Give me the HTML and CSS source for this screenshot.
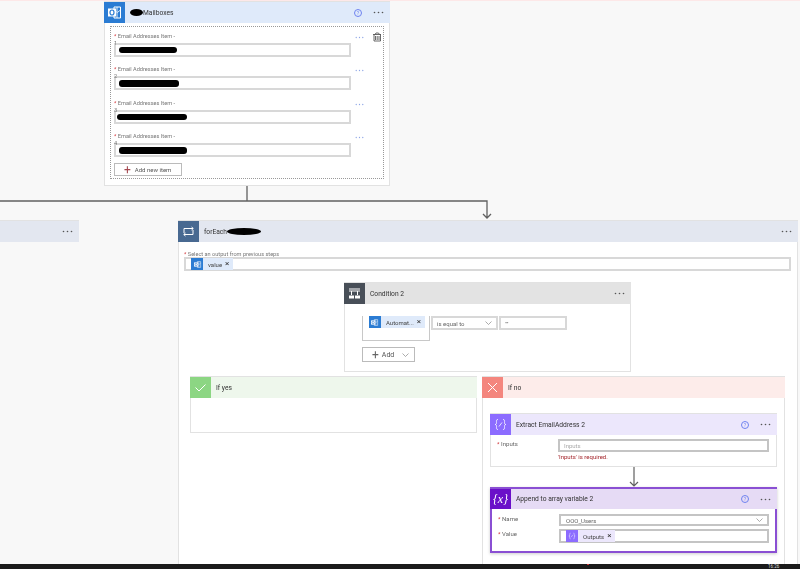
FILE: index.html
```html
<!DOCTYPE html>
<html>
    <head>
        <meta charset="utf-8">
        <title>Flow designer</title>
        <link rel="stylesheet" href="styles.css">
    </head>
    <body>
        <svg class="defs" width="0" height="0">
            <symbol id="outlook" viewBox="0 0 21 21">
                <path d="M10 5h6.500v11H10z" fill="none" stroke="#fff" stroke-width="1"/>
                <path d="M10 8l3.300 2.500L16.500 8M13 5v11" fill="none" stroke="#fff" stroke-width=".8"/>
                <rect x="4" y="6.500" width="8" height="8" fill="#fff"/>
                <ellipse cx="8" cy="10.500" rx="2" ry="2.500" fill="none" stroke="#2b7cd3" stroke-width="1.200"/>
            </symbol>
            <symbol id="dots" viewBox="0 0 11 3">
                <circle cx="1.500" cy="1.500" r=".8"/>
                <circle cx="5.500" cy="1.500" r=".8"/>
                <circle cx="9.500" cy="1.500" r=".8"/>
            </symbol>
            <symbol id="compose" viewBox="0 0 21 21">
                <path d="M8 5.500c-2 0-1.500 1.500-1.500 3 0 1.500-.5 2-1.500 2 1 0 1.500.5 1.500 2s-.5 3 1.500 3M13 5.500c2 0 1.500 1.500 1.500 3 0 1.500.5 2 1.500 2-1 0-1.500.5-1.500 2s.5 3-1.500 3M9 12.500l3-4" fill="none" stroke="#fff" stroke-width=".8"/>
            </symbol>
        </svg>

        <main class="canvas">
            <!-- connector lines between the steps -->
            <svg class="wires" width="800" height="230">
                <path d="M247 186V201M0 201H487V218M483 214l4 4 4-4" fill="none" stroke="#606060" stroke-width="1.300"/>
            </svg>

            <!-- Mailboxes step -->
            <section class="card mailboxes">
                <header class="head head-blue">
                    <span class="icon icon-outlook"><svg width="21" height="21"><use href="#outlook"/></svg></span>
                    <span class="blob blob-title"></span>
                    <span class="title title-tight">Mailboxes</span>
                    <span class="help">?</span>
                    <svg class="more" width="11" height="3"><use href="#dots"/></svg>
                </header>
                <div class="array">
                    <div class="row">
                        <div class="row-main">
                            <div class="item-label"><b>*</b> Email Addresses Item -<br>1</div>
                            <div class="field item-field"><span class="blob blob-1"></span></div>
                        </div>
                        <svg class="more more-blue" width="9" height="3"><use href="#dots"/></svg>
                        <svg class="bin" width="10" height="10" viewBox="0 0 10 10">
                            <path d="M1 2.500h8M2 2.500v6.500h6.500V2.500M3.500 4v4M5.200 4v4M7 4v4M3 2.500l1-1.500h2.500l1 1.500" fill="none" stroke="#444" stroke-width=".8"/>
                        </svg>
                    </div>
                    <div class="row">
                        <div class="row-main">
                            <div class="item-label"><b>*</b> Email Addresses Item -<br>2</div>
                            <div class="field item-field"><span class="blob blob-2"></span></div>
                        </div>
                        <svg class="more more-blue" width="9" height="3"><use href="#dots"/></svg>
                    </div>
                    <div class="row">
                        <div class="row-main">
                            <div class="item-label"><b>*</b> Email Addresses Item -<br>3</div>
                            <div class="field item-field"><span class="blob blob-3"></span></div>
                        </div>
                        <svg class="more more-blue" width="9" height="3"><use href="#dots"/></svg>
                    </div>
                    <div class="row">
                        <div class="row-main">
                            <div class="item-label"><b>*</b> Email Addresses Item -<br>4</div>
                            <div class="field item-field"><span class="blob blob-4"></span></div>
                        </div>
                        <svg class="more more-blue" width="9" height="3"><use href="#dots"/></svg>
                    </div>
                    <button type="button" class="btn add-item"><span class="plus plus-red">+</span> Add new item</button>
                </div>
            </section>

            <!-- collapsed step cut off by the left edge -->
            <section class="card stub">
                <header class="head head-slate">
                    <svg class="more more-end" width="11" height="3"><use href="#dots"/></svg>
                </header>
            </section>

            <!-- forEach step -->
            <section class="card foreach">
                <header class="head head-slate">
                    <span class="icon icon-loop">
                        <svg width="21" height="21" viewBox="0 0 21 21">
                            <path d="M6 12V7.500h9M15 9v4.500H6M13.500 6l1.800 1.500L13.500 9M7.500 12l-1.800 1.500L7.500 15" fill="none" stroke="#fff" stroke-width="1"/>
                        </svg>
                    </span>
                    <span class="title">forEach</span>
                    <span class="blob blob-foreach"></span>
                    <svg class="more more-end" width="11" height="3"><use href="#dots"/></svg>
                </header>
                <div class="select-label"><b>*</b> Select an output from previous steps</div>
                <div class="field select-field">
                    <span class="chip chip-blue">
                        <span class="chip-icon icon-outlook"><svg width="11" height="11"><use href="#outlook"/></svg></span>
                        <span class="chip-text">value</span><span class="chip-x">×</span>
                    </span>
                </div>

                <!-- Condition 2 -->
                <section class="card condition">
                    <header class="head head-grey">
                        <span class="icon icon-condition">
                            <svg width="21" height="21" viewBox="0 0 21 21">
                                <path d="M5 6h11M5 8h11M7.500 8v4M13.500 8v4" fill="none" stroke="#fff" stroke-width="1"/>
                                <path d="M5 12.500h5v3H5zM11 12.500h5v3h-5z" fill="#fff"/>
                            </svg>
                        </span>
                        <span class="title">Condition 2</span>
                        <svg class="more more-end" width="11" height="3"><use href="#dots"/></svg>
                    </header>
                    <div class="rule">
                        <div class="rule-left">
                            <span class="chip chip-blue">
                                <span class="chip-icon icon-outlook"><svg width="11" height="11"><use href="#outlook"/></svg></span>
                                <span class="chip-text">Automat...</span><span class="chip-x">×</span>
                            </span>
                        </div>
                        <div class="field rule-op">is equal to
                            <svg class="caret" width="7" height="4" viewBox="0 0 7 4"><path d="M.5.500l3 3 3-3" fill="none" stroke="#888" stroke-width=".7"/></svg>
                        </div>
                        <div class="field rule-value">""</div>
                    </div>
                    <button type="button" class="btn add-rule"><span class="plus">+</span> Add
                        <svg class="caret" width="7" height="4" viewBox="0 0 7 4"><path d="M.5.500l3 3 3-3" fill="none" stroke="#888" stroke-width=".7"/></svg>
                    </button>
                </section>

                <div class="branches">
                    <section class="card if-yes">
                        <header class="head head-green">
                            <span class="icon icon-yes">
                                <svg width="21" height="21" viewBox="0 0 21 21"><path d="M5.500 10.500l3.500 3.500 6.500-6.500" fill="none" stroke="#fff" stroke-width="1"/></svg>
                            </span>
                            <span class="title">If yes</span>
                        </header>
                    </section>

                    <section class="card if-no">
                        <header class="head head-red">
                            <span class="icon icon-no">
                                <svg width="21" height="21" viewBox="0 0 21 21"><path d="M6 6l9 9M15 6l-9 9" fill="none" stroke="#fff" stroke-width="1"/></svg>
                            </span>
                            <span class="title">If no</span>
                        </header>

                        <section class="card step extract">
                            <header class="head head-lilac">
                                <span class="icon icon-compose"><svg width="21" height="21"><use href="#compose"/></svg></span>
                                <span class="title">Extract EmailAddress 2</span>
                                <span class="help">?</span>
                                <svg class="more" width="11" height="3"><use href="#dots"/></svg>
                            </header>
                            <div class="param param-inputs">
                                <div class="param-name"><b>*</b> Inputs</div>
                                <div>
                                    <div class="field param-field placeholder">Inputs</div>
                                    <div class="error">'Inputs' is required.</div>
                                </div>
                            </div>
                        </section>

                        <div class="link">
                            <svg width="10" height="20" viewBox="0 0 10 20"><path d="M5 0V19M1 15l4 4 4-4" fill="none" stroke="#606060" stroke-width="1.200"/></svg>
                        </div>

                        <section class="card step append">
                            <header class="head head-violet">
                                <span class="icon icon-variable"><i>{x}</i></span>
                                <span class="title">Append to array variable 2</span>
                                <span class="help">?</span>
                                <svg class="more" width="11" height="3"><use href="#dots"/></svg>
                            </header>
                            <div class="param param-first">
                                <div class="param-name"><b>*</b> Name</div>
                                <div class="field param-field name-field">OOO_Users
                                    <svg class="caret" width="7" height="4" viewBox="0 0 7 4"><path d="M.5.500l3 3 3-3" fill="none" stroke="#888" stroke-width=".7"/></svg>
                                </div>
                            </div>
                            <div class="param">
                                <div class="param-name"><b>*</b> Value</div>
                                <div class="field param-field value-field">
                                    <span class="chip chip-lilac">
                                        <span class="chip-icon icon-compose"><svg width="12" height="12"><use href="#compose"/></svg></span>
                                        <span class="chip-text">Outputs</span><span class="chip-x">×</span>
                                    </span>
                                </div>
                            </div>
                        </section>
                    </section>
                </div>
            </section>
        </main>

        <footer class="taskbar">
            <span class="tray-dot"></span>
            <span class="clock">16:26</span>
        </footer>
    </body>
</html>
```

FILE: styles.css
```css
html, body {
    margin: 0;
    height: 569px;
    overflow: hidden;
}

body {
    display: flex;
    flex-direction: column;
    background: #f8f8f8;
    border-top: 1px solid #fde8e8;
    box-sizing: border-box;
    font-family: Roboto, "Liberation Sans", sans-serif;
    font-size: 6px;
    color: #444;
}

.defs {
    position: absolute;
}

b {
    color: #d13438;
    font-weight: normal;
}

/* the free canvas the steps are placed on */
.canvas {
    position: relative;
    flex: 1;
    overflow: hidden;
    filter: blur(.4px);
}

.wires {
    position: absolute;
    left: 0;
    top: -1px;
}

.card {
    background: #fff;
    border: 1px solid #e2e2e2;
    box-sizing: border-box;
}

.mailboxes {
    position: absolute;
    left: 104px;
    top: 0;
    width: 286px;
    height: 185px;
}

.stub {
    position: absolute;
    left: -10px;
    top: 219px;
    width: 89px;
    height: 22px;
}

.foreach {
    position: absolute;
    left: 178px;
    top: 219px;
    width: 620px;
    height: 400px;
}

/* step header, it runs over the side borders of its card */
.head {
    display: flex;
    align-items: center;
    height: 21px;
    margin: 0 -1px;
    font-size: 6.700px;
    color: #333;
}

.head-blue { background: #dfeafa; }
.head-slate { background: #e3e7f0; }
.head-grey { background: #e3e3e3; }
.head-green { background: #eef7ec; }
.head-red { background: #fdecea; }
.head-lilac { background: #ece7fc; }
.head-violet { background: #e6dbf5; }

.icon {
    flex: none;
    width: 21px;
    height: 21px;
    display: flex;
    align-items: center;
    justify-content: center;
}

.icon-outlook { background: #2b7cd3; }
.icon-loop { background: #486991; }
.icon-condition { background: #484f58; }
.icon-yes { background: #8cd683; }
.icon-no { background: #f4867e; }
.icon-compose { background: #8c6cff; }
.icon-variable {
    background: #6a10c9;
    color: #fff;
    font-family: "Liberation Serif", serif;
    font-size: 12px;
}

.title {
    margin-left: 5px;
}

.title-tight {
    margin-left: 0;
    margin-right: auto;
}

.extract .title,
.append .title {
    margin-right: auto;
}

.help {
    width: 6px;
    height: 6px;
    border: 1px solid #6f83f0;
    border-radius: 50%;
    margin-right: 11px;
    color: #6f83f0;
    font-size: 5px;
    line-height: 6px;
    text-align: center;
}

.more {
    flex: none;
    fill: #555;
    margin-right: 6px;
}

.more-end {
    margin-left: auto;
}

.more-blue {
    fill: #8ea6e6;
    margin: 3px 0 0 4px;
}

/* black marker over the addresses */
.blob {
    display: inline-block;
    background: #000;
    border-radius: 50%;
}

.blob-title {
    width: 13px;
    height: 7px;
    margin-left: 5px;
}

.blob-foreach {
    width: 34px;
    height: 7px;
}

.blob-1,
.blob-2,
.blob-3,
.blob-4 {
    border-radius: 3px;
}

.blob-1 { width: 58px; height: 6px; }
.blob-2 { width: 60px; height: 7px; }
.blob-3 { width: 70px; height: 6px; margin-left: -2px; }
.blob-4 { width: 68px; height: 7px; }

/* array parameter */
.array {
    margin: 3px 5px 0;
    height: 153px;
    padding: 6px 3px 0;
    border: 1px dotted #999;
    box-sizing: border-box;
}

.row {
    display: flex;
    margin-bottom: 9.400px;
}

.row-main {
    flex: none;
    width: 237px;
}

.item-label {
    position: relative;
    height: 10px;
    font-size: 5.600px;
    line-height: 7px;
    color: #777;
}

.bin {
    flex: none;
    margin-left: 8px;
    margin-top: -1px;
}

.field {
    display: flex;
    align-items: center;
    background: #fff;
    border: 2px solid #d8d8d8;
    box-sizing: border-box;
    color: #666;
}

.item-field {
    height: 14px;
    padding-left: 3px;
}

.btn {
    display: flex;
    align-items: center;
    background: #fff;
    border: 1px solid #bbb;
    box-sizing: border-box;
    font-family: inherit;
    color: #555;
    padding: 0;
}

.add-item {
    width: 68px;
    height: 13px;
    margin-top: -3.400px;
    padding-left: 9px;
    font-size: 6px;
}

.plus {
    margin-right: 3px;
    font-size: 12px;
    font-weight: normal;
    line-height: 10px;
    color: #666;
}

.plus-red {
    color: #a4474f;
    margin-right: 4px;
}

/* forEach body */
.select-label {
    height: 15px;
    margin-left: 5px;
    padding-top: 9px;
    box-sizing: border-box;
    font-size: 5.600px;
    line-height: 7px;
    color: #777;
}

.select-field {
    width: 607px;
    height: 14px;
    margin-left: 5px;
    padding-left: 5px;
}

.chip {
    display: inline-flex;
    flex: none;
    align-items: center;
    height: 12px;
    color: #444;
    font-size: 6px;
}

.chip-blue { background: #dfeafa; }
.chip-lilac { background: #ece7fc; }

.chip-icon {
    width: 12px;
    height: 12px;
    display: flex;
    align-items: center;
    justify-content: center;
}

.chip-text {
    margin: 0 3px 0 5px;
}

.chip-x {
    margin-right: 4px;
    font-size: 8px;
    line-height: 8px;
    color: #333;
}

.condition {
    width: 287px;
    height: 90px;
    margin: 11px 0 0 165px;
}

.rule {
    display: flex;
    margin: 12px 0 0 17px;
}

.rule-left {
    width: 68px;
    height: 25px;
    border: 1px solid #c8c8c8;
    border-top: none;
    box-sizing: border-box;
    padding-left: 6px;
}

.rule-left .chip {
    width: 56px;
    justify-content: space-between;
}

.rule-op {
    width: 67px;
    height: 14px;
    margin-left: 1px;
    padding: 0 4px;
}

.rule-value {
    width: 68px;
    height: 14px;
    margin-left: 1px;
    padding-left: 4px;
}

.caret {
    margin-left: auto;
    flex: none;
}

.add-rule {
    width: 53px;
    height: 15px;
    margin: 6px 0 0 17px;
    padding: 0 5px 0 9px;
    font-size: 7px;
}

/* Yes and No branches */
.branches {
    display: flex;
    gap: 5px;
    margin: 4px 0 0 11px;
}

.if-yes {
    width: 287px;
    height: 57px;
}

.if-no {
    width: 303px;
    height: 220px;
}

.step {
    width: 287px;
    margin-left: 7px;
}

.extract {
    height: 54px;
    margin-top: 15px;
}

.link {
    display: flex;
    justify-content: center;
    width: 287px;
    height: 20px;
    margin-left: 7px;
}

.append {
    height: 66px;
    border: 2px solid #8a4fd3;
    box-shadow: 0 1px 3px rgba(0, 0, 0, .2);
}

.append .head {
    height: 20px;
    margin: 0 -2px;
}

.append .icon {
    height: 20px;
}

/* parameters inside a step */
.param {
    display: flex;
    margin-top: 3px;
    padding-right: 7px;
}

.param-inputs {
    margin-top: 4px;
}

.param-first {
    margin-top: 5px;
}

.param-name {
    width: 68px;
    padding-left: 6px;
    box-sizing: border-box;
    line-height: 9px;
    color: #666;
}

.param-field {
    width: 211px;
    padding: 0 4px;
    border-color: #c4c4c4;
}

.placeholder {
    height: 13px;
    padding-left: 4px;
    color: #aaa;
}

.error {
    margin-top: 1px;
    line-height: 8px;
    color: #a4262c;
}

.append .param {
    padding-right: 0;
}

.append .param-name {
    width: 67px;
}

.name-field {
    height: 12px;
    width: 210px;
    padding-left: 5px;
}

.value-field {
    height: 14px;
    width: 210px;
    padding-left: 5px;
}

/* windows taskbar, only its top edge is in the picture */
.taskbar {
    position: relative;
    flex: none;
    height: 5px;
    background: #1b1b1b;
    overflow: hidden;
}

.tray-dot {
    position: absolute;
    left: 587px;
    top: 0;
    width: 2px;
    height: 1px;
    background: #d13438;
}

.clock {
    position: absolute;
    left: 768px;
    top: 0;
    font-size: 4.500px;
    line-height: 5px;
    color: #ddd;
}
```
